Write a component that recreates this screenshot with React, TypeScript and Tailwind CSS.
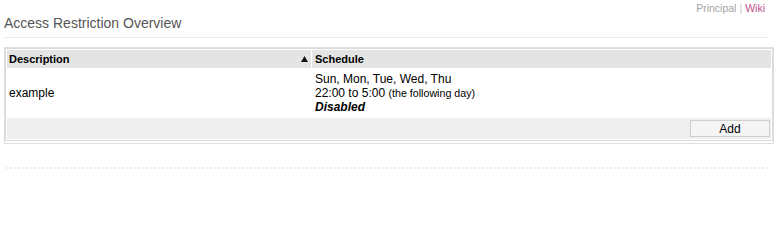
import * as React from "react"

const font = "font-['Liberation_Sans',Arial,sans-serif]"

function SortArrow() {
  return (
    <svg width="7" height="6" viewBox="0 0 7 6" className="shrink-0">
      <path d="M3.5 0 L7 6 L0 6 Z" fill="#111" />
    </svg>
  )
}

export default function App() {
  return (
    <div className={`${font} w-[775px] h-[202px] bg-white px-[4px] text-black`}>
      <div className="flex justify-end pt-[2px] pr-[6px] text-[10.5px] leading-[12px]">
        <span className="text-[#a3a3a3]">Principal</span>
        <span className="px-[3px] text-[#c8c8c8]">|</span>
        <span className="text-[#c0508c]">Wiki</span>
      </div>

      <h1 className="mr-[3px] mt-px border-b border-[#ececec] pb-[6px] text-[14px] leading-[16px] font-normal text-[#555]">
        Access Restriction Overview
      </h1>

      <div className="mt-[9px] w-[770px] border border-[#dedede] pb-[2px]">
        <table className="w-full border border-[#dadada] border-separate border-spacing-px text-[12px]">
          <thead>
            <tr className="h-[18px] bg-[#e4e4e4] text-[11px] font-bold leading-[14px]">
              <th className="w-[304px] pl-[2px] pr-[3px] text-left">
                <div className="flex items-center justify-between">
                  <span>Description</span>
                  <SortArrow />
                </div>
              </th>
              <th className="pl-[3px] text-left">Schedule</th>
            </tr>
          </thead>
          <tbody>
            <tr className="leading-[14px]">
              <td className="pl-[2px] align-middle">example</td>
              <td className="pl-[3px] py-[3px]">
                <div>Sun, Mon, Tue, Wed, Thu</div>
                <div>
                  22:00 to 5:00 <span className="text-[10.7px]">(the following day)</span>
                </div>
                <div className="font-bold italic">Disabled</div>
              </td>
            </tr>
            <tr className="bg-[#efefef]">
              <td colSpan={2} className="h-[21px] pr-[1px] text-right align-middle">
                <button className="inline-flex h-[17px] w-[80px] items-center justify-center border border-[#cfcfcf] bg-[#f5f5f5] text-[12px] leading-none text-black">
                  Add
                </button>
              </td>
            </tr>
          </tbody>
        </table>
      </div>

      <div className="ml-[2px] mr-[3px] mt-[23px] border-t-2 border-dotted border-[#ececec]" />
    </div>
  )
}
